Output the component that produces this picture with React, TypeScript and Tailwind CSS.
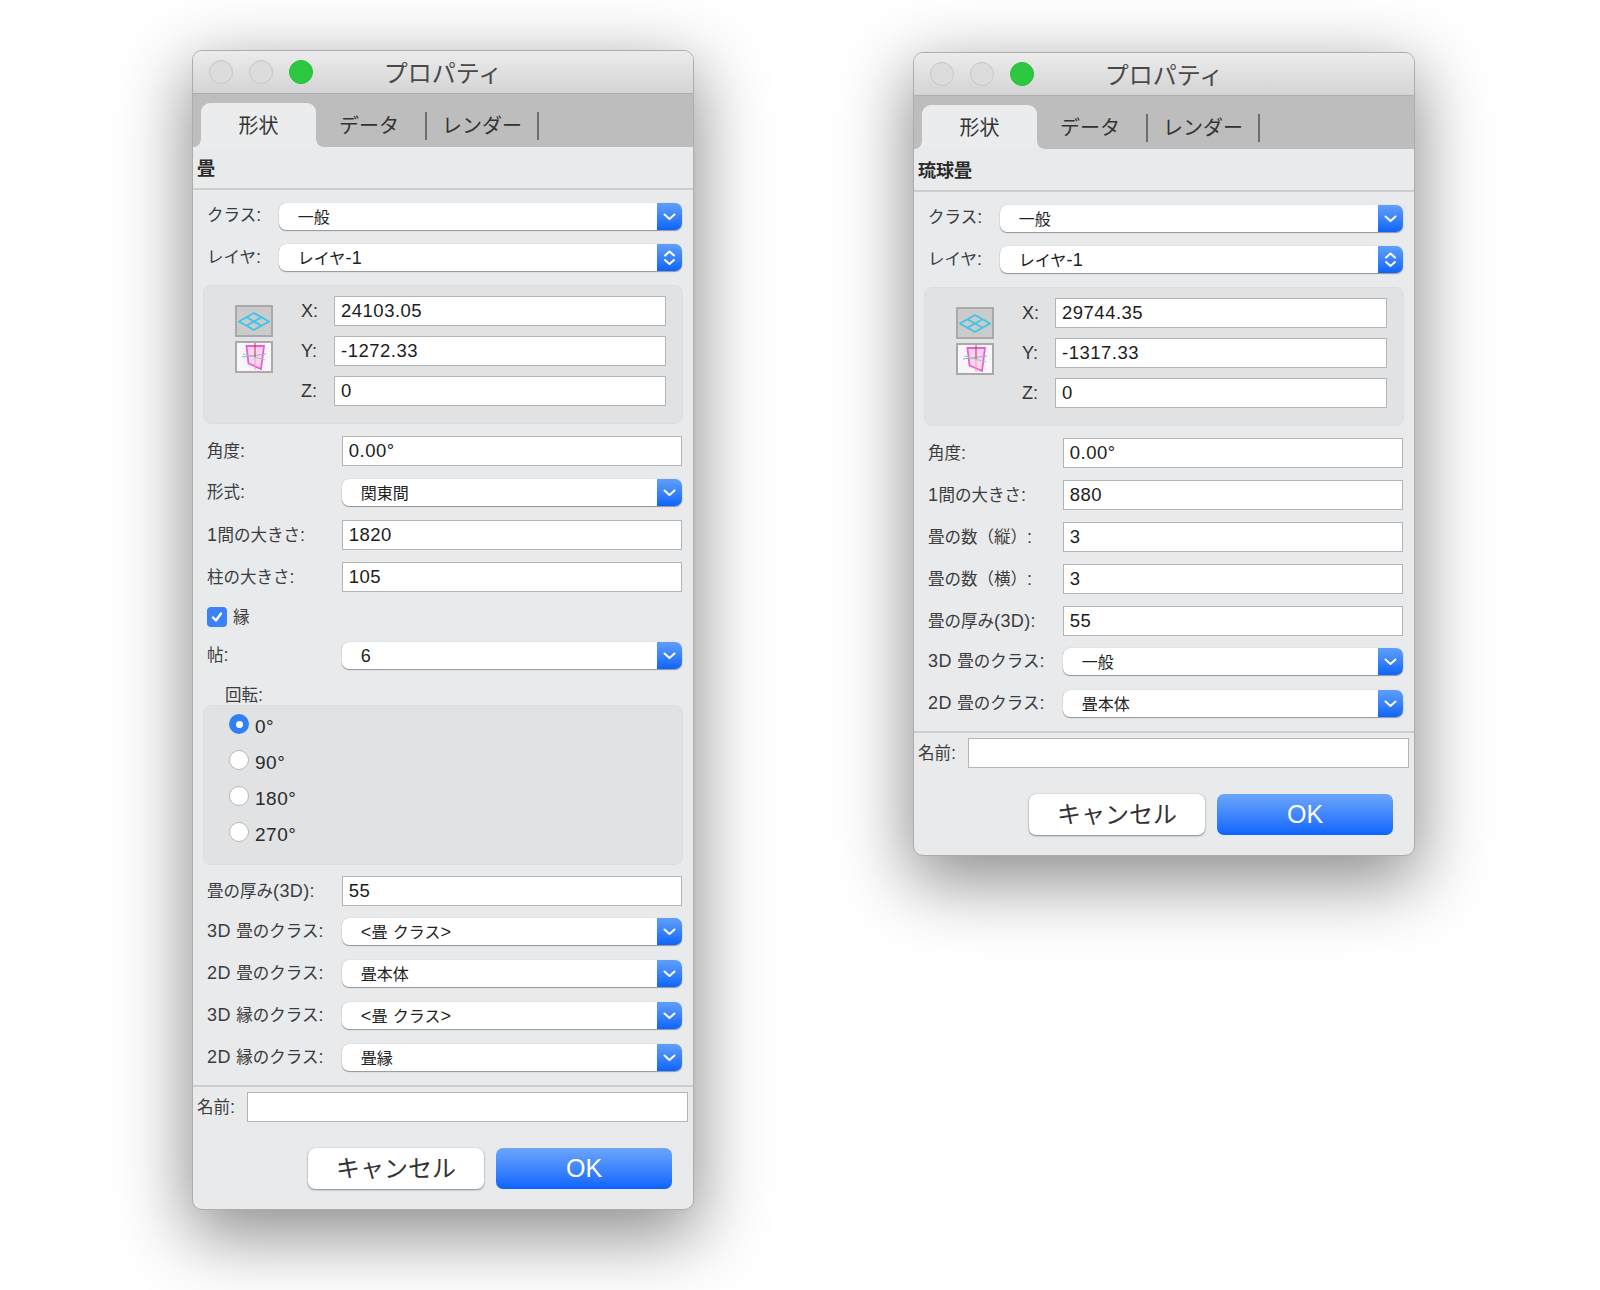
import { ReactNode } from "react";

const labelClass = "text-[16.5px] leading-none text-[#3c3c3c] whitespace-nowrap";

// latin characters sit larger than the kana beside them in the original
function Mixed({ text, size }: { text: string; size: string }) {
  const parts = text.split(/([\x20-\x7e]+)/).filter(Boolean);
  return (
    <>
      {parts.map((p, i) =>
        /[\x20-\x7e]/.test(p) ? (
          <span key={i} className={size}>
            {p}
          </span>
        ) : (
          <span key={i}>{p}</span>
        ),
      )}
    </>
  );
}

function Chevron({ double }: { double?: boolean }) {
  return (
    <svg width="25" height="27" viewBox="0 0 25 27" fill="none" stroke="white" strokeWidth="2" strokeLinecap="round" strokeLinejoin="round">
      {double ? (
        <>
          <path d="M8 11.5 L12.5 7.5 L17 11.5" />
          <path d="M8 16 L12.5 20 L17 16" />
        </>
      ) : (
        <path d="M7.5 11.5 L12.5 16 L17.5 11.5" />
      )}
    </svg>
  );
}

function SelectBox({ value, double, className }: { value: string; double?: boolean; className: string }) {
  return (
    <div className={`flex h-[27px] rounded-[7px] bg-white shadow-[0_1px_1px_rgba(0,0,0,0.35),0_0_1px_rgba(0,0,0,0.3)] ${className}`}>
      <div className="flex-1 whitespace-pre pl-[19px] text-[16px] leading-[29px] text-[#222]">
        <Mixed text={value} size="text-[18px] tracking-[0.3px]" />
      </div>
      <div className="w-[25px] rounded-r-[7px] bg-gradient-to-b from-[#5f9ffb] to-[#0a63fb]">
        <Chevron double={double} />
      </div>
    </div>
  );
}

function TextBox({ value, className }: { value?: string; className: string }) {
  return (
    <div className={`h-[30px] border border-[#b4b4b4] bg-white pl-[6px] text-[18.5px] leading-[28px] tracking-[0.5px] text-[#1c1c1c] ${className}`}>
      {value}
    </div>
  );
}

function Label({ text, className }: { text: string; className?: string }) {
  return (
    <div className={`${labelClass} whitespace-pre ${className ?? ""}`}>
      <Mixed text={text} size="text-[18px] tracking-[0.4px]" />
    </div>
  );
}

function FieldRow({ label, className, children }: { label: string; className?: string; children: ReactNode }) {
  return (
    <div className={`flex items-center ${className ?? ""}`}>
      <Label text={label} className="mb-[1px] w-[135px]" />
      {children}
    </div>
  );
}

function InputRow({ label, value, className }: { label: string; value: string; className?: string }) {
  return (
    <FieldRow label={label} className={className}>
      <TextBox value={value} className="w-[341px]" />
    </FieldRow>
  );
}

function SelectRow({ label, value, className }: { label: string; value: string; className?: string }) {
  return (
    <FieldRow label={label} className={className}>
      <SelectBox value={value} className="w-[341px]" />
    </FieldRow>
  );
}

function PlanIcon() {
  return (
    <svg width="38" height="32" viewBox="0 0 38 32" className="block">
      <rect x="1" y="1" width="36" height="30" fill="#cbcbcb" stroke="#a9a9a9" strokeWidth="2" />
      <g fill="none" stroke="#3ec5ea" strokeWidth="2" strokeLinejoin="round">
        <path d="M19 8 L34 16.5 L19 25 L4 16.5 Z" />
        <path d="M11.5 12.25 L26.5 20.75 M26.5 12.25 L11.5 20.75" />
      </g>
    </svg>
  );
}

function ElevationIcon() {
  return (
    <svg width="38" height="32" viewBox="0 0 38 32" className="block">
      <rect x="1" y="1" width="36" height="30" fill="#f8f6f8" stroke="#a9a9a9" strokeWidth="2" />
      <path d="M11.5 5 H29 L26 28 L13.5 22.5 Z" fill="#f9d3ef" stroke="#ea5fcf" strokeWidth="1.8" />
      <path d="M7 16 L31 13" stroke="#a6a3ea" strokeWidth="1" />
      <path d="M8 13 L30 19" stroke="#8fd69a" strokeWidth="1" />
      <path d="M20 2 V16" stroke="#c2334e" strokeWidth="1" />
      <path d="M20 16 V29" stroke="#e9a6bd" strokeWidth="1" />
    </svg>
  );
}

function CoordBox({ x, y }: { x: string; y: string }) {
  const rows = [
    { label: "X:", value: x },
    { label: "Y:", value: y },
    { label: "Z:", value: "0" },
  ];
  return (
    <div className="mx-[10px] mt-[14px] flex h-[139px] rounded-[8px] border border-[#dcdddf] bg-[#e1e2e4] pl-[31px] pt-[10px]">
      <div className="mr-[28px] mt-[9px] flex w-[38px] flex-col gap-[4px]">
        <PlanIcon />
        <ElevationIcon />
      </div>
      <div className="flex flex-col gap-[10px]">
        {rows.map((r) => (
          <div key={r.label} className="flex items-center">
            <div className="w-[33px] text-[18px] leading-none text-[#333]">{r.label}</div>
            <TextBox value={r.value} className="w-[332px]" />
          </div>
        ))}
      </div>
    </div>
  );
}

function Radio({ label, checked }: { label: string; checked?: boolean }) {
  return (
    <div className="flex h-[20px] items-center gap-[6px]">
      {checked ? (
        <div className="flex size-[20px] items-center justify-center rounded-full bg-[#307ff6]">
          <div className="size-[7px] rounded-full bg-white" />
        </div>
      ) : (
        <div className="size-[20px] rounded-full border border-[#b9b9b9] bg-white" />
      )}
      <div className="pt-[4px] text-[19px] leading-none tracking-[0.5px] text-[#2a2a2a]">{label}</div>
    </div>
  );
}

function Window({ heading, children, className }: { heading: string; children: ReactNode; className?: string }) {
  return (
    <div className={`w-[502px] shrink-0 overflow-hidden rounded-[10px] border border-[#adadad] bg-[#e9eaec] shadow-[0_22px_70px_4px_rgba(0,0,0,0.45)] ${className ?? ""}`}>
      {/* title bar */}
      <div className="relative flex h-[43px] items-center border-b border-[#aeaeae] bg-gradient-to-b from-[#ececec] to-[#d4d4d4]">
        <div className="ml-[16px] flex gap-[16px]">
          <div className="size-[24px] rounded-full border border-[#c6c6c6] bg-[#dcdcdc]" />
          <div className="size-[24px] rounded-full border border-[#c6c6c6] bg-[#dcdcdc]" />
          <div className="size-[24px] rounded-full border border-[#27b93a] bg-[#2cc83f]" />
        </div>
        <div className="absolute inset-x-0 top-[7px] text-center text-[24px] leading-[32px] text-[#4a4a4a]">プロパティ</div>
      </div>
      {/* tabs */}
      <div className="flex h-[53px] items-end bg-[#bdbdbe] pl-[8px]">
        <div className="relative flex h-[44px] w-[115px] items-center justify-center rounded-t-[9px] bg-[#ebecee] pt-[2px] text-[20px] text-[#333]">
          形状
          <svg width="8" height="8" viewBox="0 0 8 8" className="absolute bottom-0 left-[-8px]">
            <path d="M8 0 V8 H0 Q7 8 8 0 Z" fill="#ebecee" />
          </svg>
          <svg width="8" height="8" viewBox="0 0 8 8" className="absolute bottom-0 right-[-8px]">
            <path d="M0 0 V8 H8 Q1 8 0 0 Z" fill="#ebecee" />
          </svg>
        </div>
        <div className="flex h-[44px] items-center pt-[2px] text-[20px] text-[#333]">
          <span className="ml-[23px]">データ</span>
          <span className="ml-[26px] h-[28px] w-[2px] bg-[#6d6d6d]" />
          <span className="ml-[15px]">レンダー</span>
          <span className="ml-[15px] h-[28px] w-[2px] bg-[#6d6d6d]" />
        </div>
      </div>
      {/* heading */}
      <div className="flex h-[43px] items-center border-b-2 border-[#cdcdcd] pl-[4px] pt-[4px] text-[18px] font-bold text-[#2a2a2a]">{heading}</div>
      {children}
    </div>
  );
}

function TopSelects() {
  return (
    <div className="pl-[14px] pr-[11px] pt-[13px]">
      <div className="flex items-center">
        <Label text="クラス:" className="mb-[3px] w-[72px]" />
        <SelectBox value="一般" className="w-[404px]" />
      </div>
      <div className="mt-[14px] flex items-center">
        <Label text="レイヤ:" className="mb-[2px] w-[72px]" />
        <SelectBox value="レイヤ-1" double className="w-[404px]" />
      </div>
    </div>
  );
}

function Footer({ className, bottom }: { className: string; bottom: string }) {
  return (
    <>
      <div className={`h-[2px] bg-[#cdcdcd] ${className}`} />
      <div className="mt-[5px] flex items-center pl-[4px]">
        <Label text="名前:" className="w-[50px]" />
        <TextBox className="w-[441px]" />
      </div>
      <div className={`mt-[26px] flex justify-end gap-[12px] pr-[21px] ${bottom}`}>
        <div className="flex h-[41px] w-[176px] items-center justify-center rounded-[7px] bg-white text-[24px] text-[#333] shadow-[0_1px_2px_rgba(0,0,0,0.4),0_0_1px_rgba(0,0,0,0.35)]">
          キャンセル
        </div>
        <div className="flex h-[41px] w-[176px] items-center justify-center rounded-[7px] bg-gradient-to-b from-[#6ba5fb] to-[#0a63fd] text-[25px] text-white">
          OK
        </div>
      </div>
    </>
  );
}

export default function App() {
  return (
    <div className="flex min-h-[1290px] items-start overflow-hidden bg-white pl-[192px] pt-[50px] font-['Liberation_Sans','Noto_Sans_CJK_JP',sans-serif]">
      {/* 畳 */}
      <Window heading="畳">
        <TopSelects />
        <CoordBox x="24103.05" y="-1272.33" />
        <div className="pl-[14px] pr-[11px] pt-[12px]">
          <InputRow label="角度:" value="0.00°" />
          <SelectRow label="形式:" value="関東間" className="mt-[13px]" />
          <InputRow label="1間の大きさ:" value="1820" className="mt-[14px]" />
          <InputRow label="柱の大きさ:" value="105" className="mt-[12px]" />
          <div className="mt-[15px] flex items-center gap-[6px]">
            <div className="flex size-[20px] items-center justify-center rounded-[4px] bg-[#3b82f6]">
              <svg width="14" height="14" viewBox="0 0 14 14" fill="none" stroke="white" strokeWidth="2.4" strokeLinecap="round" strokeLinejoin="round">
                <path d="M3 7.5 L6 10.5 L11 3.5" />
              </svg>
            </div>
            <div className={labelClass}>縁</div>
          </div>
          <SelectRow label="帖:" value="6" className="mt-[15px]" />
          <div className={`${labelClass} ml-[18px] mt-[17px] h-[19px]`}>
            <Mixed text="回転:" size="text-[18px]" />
          </div>
        </div>
        <div className="mx-[10px] flex h-[160px] flex-col gap-[16px] rounded-[8px] border border-[#dcdddf] bg-[#e1e2e4] pl-[25px] pt-[8px]">
          <Radio label="0°" checked />
          <Radio label="90°" />
          <Radio label="180°" />
          <Radio label="270°" />
        </div>
        <div className="pl-[14px] pr-[11px] pt-[11px]">
          <InputRow label="畳の厚み(3D):" value="55" />
          <SelectRow label="3D 畳のクラス:" value="<畳 クラス>" className="mt-[12px]" />
          <SelectRow label="2D 畳のクラス:" value="畳本体" className="mt-[15px]" />
          <SelectRow label="3D 縁のクラス:" value="<畳 クラス>" className="mt-[15px]" />
          <SelectRow label="2D 縁のクラス:" value="畳縁" className="mt-[15px]" />
        </div>
        <Footer className="mt-[14px]" bottom="pb-[20px]" />
      </Window>

      {/* 琉球畳 */}
      <Window heading="琉球畳" className="ml-[219px] mt-[2px]">
        <TopSelects />
        <CoordBox x="29744.35" y="-1317.33" />
        <div className="pl-[14px] pr-[11px] pt-[12px]">
          <InputRow label="角度:" value="0.00°" />
          <InputRow label="1間の大きさ:" value="880" className="mt-[12px]" />
          <InputRow label="畳の数（縦）:" value="3" className="mt-[12px]" />
          <InputRow label="畳の数（横）:" value="3" className="mt-[12px]" />
          <InputRow label="畳の厚み(3D):" value="55" className="mt-[12px]" />
          <SelectRow label="3D 畳のクラス:" value="一般" className="mt-[12px]" />
          <SelectRow label="2D 畳のクラス:" value="畳本体" className="mt-[15px]" />
        </div>
        <Footer className="mt-[14px]" bottom="pb-[20px]" />
      </Window>
    </div>
  );
}
